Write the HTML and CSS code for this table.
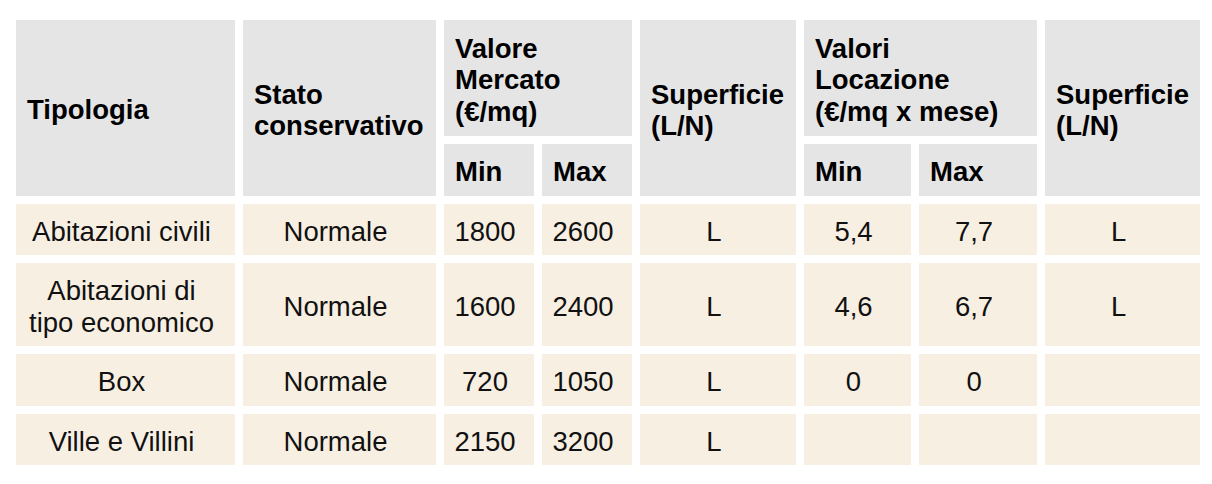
FILE: index.html
```html
<!DOCTYPE html>
<html lang="it">
<head>
<meta charset="utf-8">
<title>Valori immobiliari</title>
<link rel="stylesheet" href="styles.css">
</head>
<body>
<table class="quote">
  <colgroup>
    <col class="w-tipo">
    <col class="w-stato">
    <col class="w-num">
    <col class="w-num">
    <col class="w-sup">
    <col class="w-lmin">
    <col class="w-lmax">
    <col class="w-sup2">
  </colgroup>
  <thead>
    <tr class="h1">
      <th rowspan="2">Tipologia</th>
      <th rowspan="2">Stato<br>conservativo</th>
      <th colspan="2">Valore<br>Mercato<br>(€/mq)</th>
      <th rowspan="2">Superficie<br>(L/N)</th>
      <th colspan="2">Valori<br>Locazione<br>(€/mq x mese)</th>
      <th rowspan="2">Superficie<br>(L/N)</th>
    </tr>
    <tr class="h2">
      <th>Min</th>
      <th>Max</th>
      <th>Min</th>
      <th>Max</th>
    </tr>
  </thead>
  <tbody>
    <tr class="r1">
      <td>Abitazioni civili</td>
      <td>Normale</td>
      <td>1800</td>
      <td>2600</td>
      <td>L</td>
      <td>5,4</td>
      <td>7,7</td>
      <td>L</td>
    </tr>
    <tr class="r2">
      <td>Abitazioni di<br>tipo economico</td>
      <td>Normale</td>
      <td>1600</td>
      <td>2400</td>
      <td>L</td>
      <td>4,6</td>
      <td>6,7</td>
      <td>L</td>
    </tr>
    <tr class="r3">
      <td>Box</td>
      <td>Normale</td>
      <td>720</td>
      <td>1050</td>
      <td>L</td>
      <td>0</td>
      <td>0</td>
      <td></td>
    </tr>
    <tr class="r4">
      <td>Ville e Villini</td>
      <td>Normale</td>
      <td>2150</td>
      <td>3200</td>
      <td>L</td>
      <td></td>
      <td></td>
      <td></td>
    </tr>
  </tbody>
</table>
</body>
</html>
```

FILE: styles.css
```css
html, body {
  margin: 0;
  padding: 0;
  background: #ffffff;
}

body {
  padding: 12px 8px 0 8px;
  font-family: "Liberation Sans", Arial, sans-serif;
  color: #000;
}

.quote {
  table-layout: fixed;
  width: 1200px;
  border-collapse: separate;
  border-spacing: 8px;
  font-size: 27.5px;
  line-height: 31.5px;
}

.w-tipo { width: 219px; }
.w-stato { width: 193px; }
.w-num { width: 90px; }
.w-sup { width: 156px; }
.w-lmin { width: 107px; }
.w-lmax { width: 118px; }
.w-sup2 { width: 155px; }

.quote th {
  background: #e5e5e5;
  font-weight: bold;
  text-align: left;
  vertical-align: middle;
  padding: 4px 4px 0 11px;
  white-space: nowrap;
  overflow: hidden;
}

.quote td {
  background: #f8efe3;
  text-align: center;
  vertical-align: middle;
  padding: 4px 12px 0 4px;
  color: #111;
  white-space: nowrap;
}

.h1 { height: 116px; }
.h2 { height: 52px; }
.r1 { height: 51px; }
.r2 { height: 83px; }
.r3 { height: 52px; }
.r4 { height: 51px; }
```
